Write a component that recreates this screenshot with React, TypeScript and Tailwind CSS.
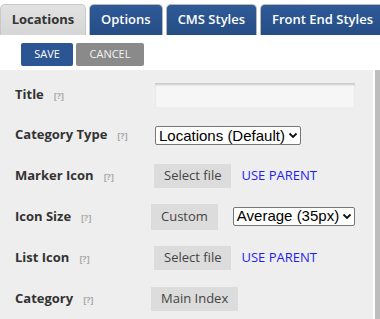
import React from 'react';

const Help = () => (
    <span className="text-[9px] text-[#aaaaaa] ml-[10px] mt-[3px]">[?]</span>
);

const Label: React.FC<{ text: string }> = ({ text }) => (
    <div className="flex items-center text-[13px] font-bold text-[#333333]">
        {text}
        <Help />
    </div>
);

const GrayButton: React.FC<{ text: string; className?: string }> = ({ text, className }) => (
    <span className={`inline-flex items-center h-[24px] px-[10px] bg-[#dcdcdc] text-[13px] text-[#444444] ${className ?? ''}`}>
        {text}
    </span>
);

const Select: React.FC<{ value: string; className?: string }> = ({ value, className }) => (
    <span
        className={`inline-flex items-center h-[19px] pl-[3px] pr-[2px] bg-white border border-[#767676] rounded-[2px] text-[15px] text-black ${className ?? ''}`}
        style={{ fontFamily: '"Liberation Sans", Arial, sans-serif' }}
    >
        {value}
        <svg className="ml-[3px]" width="10" height="7" viewBox="0 0 10 7">
            <path d="M1.5 1.5 L5 5 L8.5 1.5" fill="none" stroke="#111" strokeWidth="1.8" />
        </svg>
    </span>
);

const UseParent = () => (
    <span className="ml-[10px] text-[13px] text-[#1f1ff0]">USE PARENT</span>
);

export default function App() {
    const tabs = ['Options', 'CMS Styles', 'Front End Styles'];
    return (
        <div className="w-[380px] h-[319px] bg-white overflow-hidden" style={{ fontFamily: '"Open Sans", sans-serif' }}>
            {/* Tabs */}
            <div className="flex items-end gap-[3px] pt-[4px] h-[35px] whitespace-nowrap">
                <div className="h-[31px] w-[86px] flex items-center justify-center bg-gradient-to-b from-[#e2e2e2] to-[#d6d6d6] border border-b-0 border-[#c8c8c8] rounded-t-[5px] text-[13px] font-bold text-[#333333] shrink-0">
                    Locations
                </div>
                {tabs.map(t => (
                    <div
                        key={t}
                        className="h-[31px] px-[11px] flex items-center bg-gradient-to-b from-[#2e5a98] to-[#264d85] border border-b-0 border-[#b8b8b8] rounded-t-[5px] text-[13px] font-semibold text-white shrink-0"
                    >
                        {t}
                    </div>
                ))}
            </div>

            {/* Actions */}
            <div className="flex gap-[3px] pl-[21px] pt-[8px] h-[35px]">
                <span className="h-[23px] w-[52px] flex items-center justify-center bg-[#2c5593] rounded-[2px] text-[11px] text-white">SAVE</span>
                <span className="h-[23px] w-[68px] flex items-center justify-center bg-[#8a8a8a] rounded-[2px] text-[11px] text-[#f2f2f2]">CANCEL</span>
            </div>

            {/* Panel */}
            <div className="flex h-[249px]">
                <div className="w-[373px] bg-[#eeeeee] pl-[15px] pt-[5px] grid grid-cols-[136px_1fr] grid-rows-[39px_repeat(5,41px)] items-center">
                    <Label text="Title" />
                    <div className="pl-[4px]">
                        <div className="w-[200px] h-[24px] bg-[#f6f6f6] shadow-[inset_0_2px_2px_rgba(0,0,0,0.18)]" />
                    </div>

                    <Label text="Category Type" />
                    <div className="pl-[4px]">
                        <Select value="Locations (Default)" />
                    </div>

                    <Label text="Marker Icon" />
                    <div className="pl-[3px] flex items-center">
                        <GrayButton text="Select file" />
                        <UseParent />
                    </div>

                    <Label text="Icon Size" />
                    <div className="flex items-center">
                        <GrayButton text="Custom" className="h-[26px]" />
                        <Select value="Average (35px)" className="ml-[15px]" />
                    </div>

                    <Label text="List Icon" />
                    <div className="pl-[3px] flex items-center">
                        <GrayButton text="Select file" />
                        <UseParent />
                    </div>

                    <Label text="Category" />
                    <div className="flex items-center">
                        <GrayButton text="Main Index" />
                    </div>
                </div>
                <div className="w-[2px] bg-white" />
                <div className="flex-1 bg-[#bdbdbd]" />
            </div>
        </div>
    );
}
